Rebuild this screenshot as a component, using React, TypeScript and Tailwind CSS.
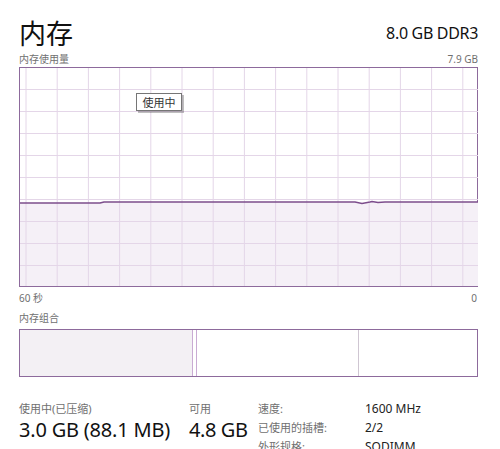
import React from "react";

const font = { fontFamily: '"Noto Sans", "Noto Sans CJK SC", sans-serif' };

function Graph() {
  const vx = Array.from({ length: 15 }, (_, k) => 6 + 31.2 * k);
  const hy = Array.from({ length: 9 }, (_, k) => 21 + 22 * k);
  const line =
    "0,135 80,135 84,134 300,134 335,134 342,135.5 350,134 352,133.5 358,134.5 365,134 458,134";
  return (
    <div className="relative h-[220px] border border-[#8d6a9c] bg-white">
      <svg width="458" height="218" className="absolute left-0 top-0 block">
        <polygon points={`${line} 458,218 0,218`} fill="#f5f0f7" />
        {vx.map((x) => (
          <line key={"v" + x} x1={x} y1={0} x2={x} y2={218} stroke="#e4d6e8" strokeWidth="1" />
        ))}
        {hy.map((y) => (
          <line key={"h" + y} x1={0} y1={y + 0.5} x2={458} y2={y + 0.5} stroke="#e4d6e8" strokeWidth="1" />
        ))}
        <polyline points={line} fill="none" stroke="#7c4d8c" strokeWidth="1.3" />
      </svg>
      <div className="absolute left-[116px] top-[25px] flex h-[18px] w-[46px] items-center justify-center border border-[#767676] bg-white text-[11px] leading-none text-[#333] shadow-[2px_2px_0_rgba(0,0,0,0.25)]">
        使用中
      </div>
    </div>
  );
}

export default function App() {
  return (
    <div className="h-[449px] w-[500px] overflow-hidden bg-white pl-[19px] pr-[22px]" style={font}>
      <div className="flex h-[50px] items-end justify-between">
        <div className="pb-[3px] text-[27px] leading-none text-[#111]">内存</div>
        <div className="pb-[9px] text-[16px] leading-none tracking-[-0.02em] text-[#111]">8.0 GB DDR3</div>
      </div>
      <div className="flex h-[17px] items-center justify-between text-[10px] leading-none text-[#707070]">
        <span>内存使用量</span>
        <span>7.9 GB</span>
      </div>
      <Graph />
      <div className="flex h-[20px] items-center justify-between pt-[1px] text-[10px] leading-none text-[#707070]">
        <span>60 秒</span>
        <span className="pr-[1px]">0</span>
      </div>
      <div className="flex h-[22px] items-center text-[10px] leading-none text-[#707070]">
        <span>内存组合</span>
      </div>
      <div className="flex h-[48px] border border-[#8d6a9c] bg-white">
        <div className="w-[173px] border-r border-[#c9abd3] bg-[#f3f0f4]" />
        <div className="w-[163px] border-l border-[#c9abd3] bg-white ml-[3px] border-r border-r-[#cfc6d2]" />
        <div className="flex-1 bg-white" />
      </div>
      <div className="mt-[25px] flex">
        <div className="w-[170px]">
          <div className="text-[11px] leading-[14px] text-[#707070]">使用中(已压缩)</div>
          <div className="mt-[3px] text-[20px] leading-[22px] tracking-[-0.01em] text-[#111]">3.0 GB (88.1 MB)</div>
        </div>
        <div className="w-[69px]">
          <div className="text-[11px] leading-[14px] text-[#707070]">可用</div>
          <div className="mt-[3px] text-[20px] leading-[22px] tracking-[-0.02em] text-[#111]">4.8 GB</div>
        </div>
        <div className="grid grid-cols-[107px_1fr] gap-y-[5px] text-[11px] leading-[14px]">
          <div className="text-[#707070]">速度:</div>
          <div className="text-[12px] text-[#222]">1600 MHz</div>
          <div className="text-[#707070]">已使用的插槽:</div>
          <div className="text-[12px] text-[#222]">2/2</div>
          <div className="text-[#707070]">外形规格:</div>
          <div className="text-[12px] text-[#222]">SODIMM</div>
        </div>
      </div>
    </div>
  );
}
